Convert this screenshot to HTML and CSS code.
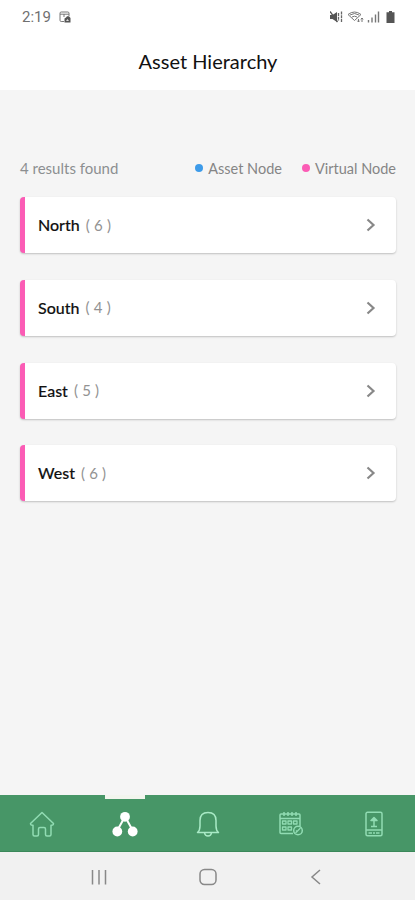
FILE: index.html
```html
<!DOCTYPE html>
<html lang="en">
<head>
<meta charset="utf-8">
<title>Asset Hierarchy</title>
<link rel="stylesheet" href="styles.css">
</head>
<body>
<div class="screen">
  <header class="header">
    <div class="status">
      <span class="time">2:19</span>
      <svg class="status-note" width="12" height="12" viewBox="0 0 12 12"><path d="M5 10.500H2.200Q1 10.500 1 9.300V2.200Q1 1 2.200 1H8.800Q10 1 10 2.200V5M1 3.200H10M5 3V6" fill="none" stroke="#777"/><path d="M5.500 7.500L7 6.500L8 5.200H10L11.500 7V11.500H5.500Z" fill="#555"/><path d="M7 10L8.500 8L10 10Z" fill="#ddd"/></svg>
      <svg class="status-icons" width="68" height="14" viewBox="0 0 68 14">
        <path d="M0 5H2.500L7 2V12L2.500 9H0Z" fill="#555"/>
        <path d="M0 1.500L7.500 12" stroke="#555" stroke-width="1.300"/>
        <path d="M8.500 3V11M11.500 1.500V12.500" stroke="#666" stroke-width="1.300" stroke-dasharray="3 .7"/>
        <path d="M18 4.500Q24.500 -.5 31 4.500L24.500 10.500ZM20 5Q24.500 2 29 5M22 7Q24.500 5.300 27 7" fill="none" stroke="#777"/>
        <path d="M28.500 12V9M27.300 10.700L28.500 12L29.700 10.700M32 12V8M30.800 9.300L32 8L33.200 9.300" fill="none" stroke="#777"/>
        <path d="M38.500 12.500V10M42 12.500V7.500M45.500 12.500V4.500M48.500 12.500V1.500" stroke="#777" stroke-width="1.400"/>
        <path d="M59 1H62V2.300H64.500V13H56.500V2.300H59Z" fill="#555"/>
      </svg>
    </div>
    <h1 class="title">Asset Hierarchy</h1>
  </header>

  <main class="content">
    <div class="summary">
      <span class="results">4 results found</span>
      <span class="legend"><i class="dot dot-asset"></i>Asset Node</span>
      <span class="legend"><i class="dot dot-virtual"></i>Virtual Node</span>
    </div>
    <div class="cards">
      <div class="card"><span class="name">North</span><span class="count">( 6 )</span><svg class="chevron" width="10" height="14" viewBox="0 0 10 14"><path d="M1.500 1.500L7.500 7L1.500 12.500"/></svg></div>
      <div class="card"><span class="name">South</span><span class="count">( 4 )</span><svg class="chevron" width="10" height="14" viewBox="0 0 10 14"><path d="M1.500 1.500L7.500 7L1.500 12.500"/></svg></div>
      <div class="card"><span class="name">East</span><span class="count">( 5 )</span><svg class="chevron" width="10" height="14" viewBox="0 0 10 14"><path d="M1.500 1.500L7.500 7L1.500 12.500"/></svg></div>
      <div class="card"><span class="name">West</span><span class="count">( 6 )</span><svg class="chevron" width="10" height="14" viewBox="0 0 10 14"><path d="M1.500 1.500L7.500 7L1.500 12.500"/></svg></div>
    </div>
  </main>

  <nav class="tabs">
    <a class="tab"><svg width="28" height="28" viewBox="0 0 28 28"><path d="M14 2.500L2.500 13.500Q2.500 15.500 5 15.200V24.500Q5 26 6.500 26H9Q10.500 26 10.500 24.500V19Q10.500 17.500 12 17.500H16Q17.500 17.500 17.500 19V24.500Q17.500 26 19 26H21.500Q23 26 23 24.500V15.200Q25.500 15.500 25.500 13.500Z"/></svg></a>
    <a class="tab active"><svg width="28" height="28" viewBox="0 0 28 28"><path d="M14 6.500L6 21M14 6.500L22 21" stroke-width="2"/><circle cx="14" cy="6.800" r="4.900"/><circle cx="6.300" cy="21.500" r="4.900"/><circle cx="21.700" cy="21.500" r="4.900"/></svg></a>
    <a class="tab bell"><svg width="28" height="28" viewBox="0 0 28 28"><path d="M3.500 22.500Q6 20.500 6 16V10.500Q6 2.500 14 2.500T22 10.500V16Q22 20.500 24.500 22.500ZM10.500 23Q11 26 14 26T17.500 23"/></svg></a>
    <a class="tab"><svg width="28" height="28" viewBox="0 0 28 28"><path d="M16 23.500H4Q3 23.500 3 22.500V5Q3 4 4 4H22Q23 4 23 5V16M3 8.500H23M7 2V6M11 2V6M15 2V6M19 2V6"/><path d="M5.500 11H9V14H5.500ZM11 11H14.500V14H11ZM16.500 11H20V14H16.500ZM5.500 17H9V20H5.500ZM11 17H14.500V20H11Z" stroke-width="1.300"/><circle cx="21" cy="20.500" r="4.300"/><path d="M18.500 23L23.500 18M19 20.500L20.500 22" stroke-width="1.200"/></svg></a>
    <a class="tab"><svg width="28" height="28" viewBox="0 0 28 28"><rect x="6" y="2.300" width="16" height="23.400" rx="1.500"/><path d="M6 20H22M8.500 23H12M13 23H15M16 23H19.500M14 16V8.500M11 10.500L14 7.500L17 10.500ZM11 16.500H17"/></svg></a>
  </nav>

  <footer class="system">
    <svg class="sys-recents" width="18" height="18" viewBox="0 0 18 18"><path d="M2.500 2V16.500M9 2V16.500M15.500 2V16.500"/></svg>
    <svg class="sys-home" width="18" height="18" viewBox="0 0 18 18"><rect x="1" y="1.500" width="16" height="15" rx="4.500"/></svg>
    <svg class="sys-back" width="18" height="18" viewBox="0 0 18 18"><path d="M13 2L5 9L13 16"/></svg>
  </footer>
</div>
</body>
</html>
```
FILE: styles.css
```css
* { box-sizing: border-box; }
body { margin: 0; font-family: Lato, sans-serif; }
.screen { display: flex; flex-direction: column; width: 415px; height: 900px; background: #f5f5f5; }
.header { height: 90px; background: #fff; }
.status { display: flex; align-items: center; height: 34px; padding: 0 17px 0 22px; }
.time { font: 15px/20px Roboto, sans-serif; color: #707070; }
.status-note { margin-left: 8px; }
.status-icons { margin-left: auto; }
.title { margin: 13px 0 0; padding-left: 1px; font-size: 20px; line-height: 28px; font-weight: 400; text-align: center; color: #111; }
.content { flex: 1; padding: 67px 19px 0 20px; }
.summary { display: flex; align-items: center; height: 22px; font-size: 14.5px; color: #858585; }
.results { margin-right: auto; font-size: 15px; color: #8c8f91; }
.legend { display: flex; align-items: center; }
.legend + .legend { margin-left: 20px; }
.dot { width: 8px; height: 8px; margin-right: 5px; border-radius: 50%; }
.dot-asset { background: #3d9be9; }
.dot-virtual { background: #fb5cb5; }
.cards { display: flex; flex-direction: column; gap: 26.7px; margin-top: 18.2px; }
.card { display: flex; align-items: center; height: 56px; padding: 0 20px 0 13px; border-left: 5px solid #fb5cb5; border-radius: 4px; background: #fff; box-shadow: 0 1px 2px rgba(0, 0, 0, .22); }
.name { padding-bottom: 1px; font-size: 16px; font-weight: 500; color: #111; -webkit-text-stroke: .15px #111; }
.count { margin-left: 6px; padding-bottom: 1px; font-size: 15px; letter-spacing: .2px; color: #929292; }
.chevron { margin-left: auto; }
.chevron path { fill: none; stroke: #888; stroke-width: 2.2; }
.tabs { display: grid; grid-template-columns: repeat(5, 1fr); height: 57px; background: #479667; border-bottom: 1px solid #3b885a; }
.tab { position: relative; display: flex; align-items: center; justify-content: center; padding-top: 1px; }
.tab svg { fill: none; stroke: #91dcb3; stroke-width: 1.5; stroke-linejoin: round; }
.tab.bell svg { stroke: #a9eac6; }
.tab.active svg { stroke: #fff; }
.tab.active circle { fill: #fff; stroke: none; }
.tab.active::before { content: ""; position: absolute; top: 0; left: 22px; width: 40px; height: 4px; background: #f2f5ee; }
.system { display: flex; align-items: center; height: 48px; padding: 2px 90px 0; justify-content: space-between; background: #f1f1f1; }
.system svg { fill: none; stroke: #888; stroke-width: 1.5; }
```
